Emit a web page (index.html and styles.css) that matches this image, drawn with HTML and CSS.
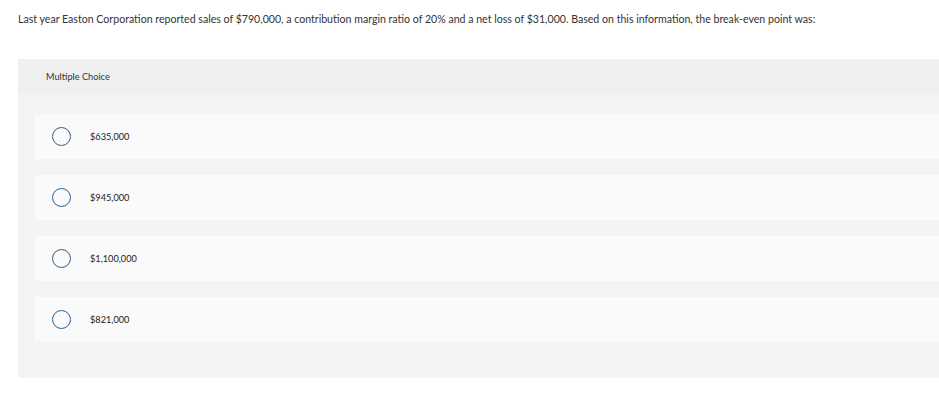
FILE: index.html
```html
<!DOCTYPE html>
<html>
<head>
<meta charset="utf-8">
<link rel="stylesheet" href="styles.css">
</head>
<body>
<p class="question">Last year Easton Corporation reported sales of $790,000, a contribution margin ratio of 20% and a net loss of $31,000. Based on this information, the break-even point was:</p>
<div class="mc">
  <div class="mc-head">Multiple Choice</div>
  <div class="mc-body">
    <div class="opt"><span class="radio"></span><span class="opt-text">$635,000</span></div>
    <div class="opt"><span class="radio"></span><span class="opt-text">$945,000</span></div>
    <div class="opt"><span class="radio"></span><span class="opt-text">$1,100,000</span></div>
    <div class="opt"><span class="radio"></span><span class="opt-text">$821,000</span></div>
  </div>
</div>
</body>
</html>
```
FILE: styles.css
```css
html, body {
  margin: 0;
  padding: 0;
  background: #ffffff;
  overflow: hidden;
}
body {
  font-family: Lato, "Open Sans", Arial, sans-serif;
  color: #333333;
}
.question {
  margin: 0;
  padding: 13px 0 0 18px;
  font-size: 10.6px;
  line-height: 13px;
  height: 59px;
  box-sizing: border-box;
}
.mc {
  margin-left: 18px;
  margin-right: -20px;
  background: #f4f4f4;
  border-radius: 0 0 0 3px;
}
.mc-head {
  background: #efefef;
  height: 34px;
  padding-left: 28px;
  display: flex;
  align-items: center;
  font-size: 9.2px;
  color: #333;
}
.mc-body {
  padding: 21px 0 36px 17px;
  display: flex;
  flex-direction: column;
  gap: 16px;
}
.opt {
  height: 45px;
  background: #fafafa;
  display: flex;
  align-items: center;
  padding-left: 17px;
}
.radio {
  width: 17px;
  height: 17px;
  border: 1.5px solid #2e5f8f;
  border-radius: 50%;
  flex: none;
}
.opt-text {
  margin-left: 19px;
  font-size: 9.2px;
  color: #222;
}
```
